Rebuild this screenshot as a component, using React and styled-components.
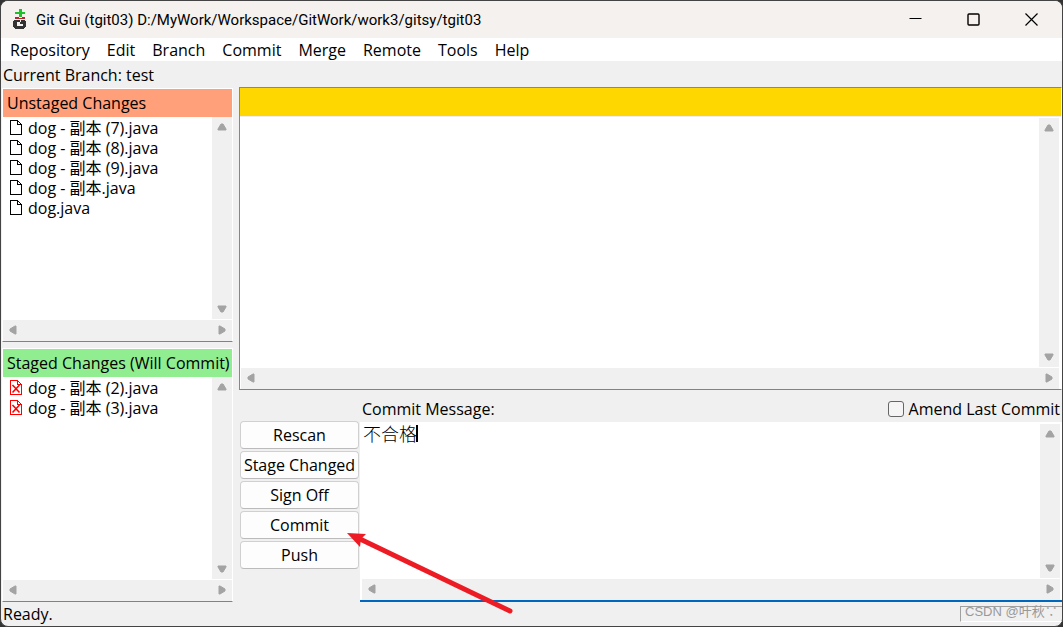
import React, { useState } from 'react'
import styled, { createGlobalStyle } from 'styled-components'

const MENUS = ['Repository', 'Edit', 'Branch', 'Commit', 'Merge', 'Remote', 'Tools', 'Help']
const UNSTAGED = ['dog - 副本 (7).java', 'dog - 副本 (8).java', 'dog - 副本 (9).java', 'dog - 副本.java', 'dog.java']
const STAGED = ['dog - 副本 (2).java', 'dog - 副本 (3).java']
const ACTIONS = ['Rescan', 'Stage Changed', 'Sign Off', 'Commit', 'Push']
const MESSAGE_SIZE = 18

export default function App() {
	const [message, setMessage] = useState('不合格')

	return (
		<>
			<GlobalStyle />
			<Window>
				<TitleBar>
					<GitLogo />
					<Title>Git Gui (tgit03) D:/MyWork/Workspace/GitWork/work3/gitsy/tgit03</Title>
					<CaptionButton aria-label="Minimize">
						<path d="M0.5 5.5h12" />
					</CaptionButton>
					<CaptionButton aria-label="Maximize">
						<rect x="1" y="1" width="11" height="11" rx="1" strokeWidth="1.4" />
					</CaptionButton>
					<CaptionButton aria-label="Close">
						<path d="M0.5 0.5l12 12M12.5 0.5l-12 12" strokeWidth="1.2" />
					</CaptionButton>
				</TitleBar>

				<MenuBar>
					{MENUS.map((name) => (
						<MenuButton key={name}>{name}</MenuButton>
					))}
				</MenuBar>

				<BranchLine>Current Branch: test</BranchLine>

				<Main>
					<Sidebar>
						<FilePanel title="Unstaged Changes" color="#ffa07a" files={UNSTAGED} />
						<FilePanel title="Staged Changes (Will Commit)" color="#90ee90" files={STAGED} removed />
					</Sidebar>

					<Content>
						<DiffPanel>
							<DiffHeader />
							<DiffBody>
								<ScrollArea>
									<DiffText />
								</ScrollArea>
							</DiffBody>
						</DiffPanel>

						<CommitArea>
							<Actions>
								{ACTIONS.map((name) => (
									<ActionButton key={name}>{name}</ActionButton>
								))}
							</Actions>
							<CommitColumn>
								<CommitHeader>
									<label htmlFor="message">Commit Message:</label>
									<Amend>
										<Checkbox type="checkbox" id="amend" />
										<label htmlFor="amend">Amend Last Commit</label>
									</Amend>
								</CommitHeader>
								<MessageBox>
									<ScrollArea>
										<MessageField>
											<MessageInput
												id="message"
												value={message}
												onChange={(e) => setMessage(e.target.value)}
											/>
											<Caret style={{ left: message.length * MESSAGE_SIZE }} />
										</MessageField>
									</ScrollArea>
								</MessageBox>
							</CommitColumn>
						</CommitArea>
					</Content>
				</Main>

				<StatusBar>
					<span>Ready.</span>
					<Watermark>CSDN @叶秋∵</Watermark>
				</StatusBar>

				<Arrow viewBox="0 0 168 84">
					<path d="M164 80L14 8" stroke="#ed1c24" strokeWidth="5" strokeLinecap="round" />
					<path d="M1 2L20 3L15 8L14 16Z" fill="#ed1c24" />
				</Arrow>
			</Window>
		</>
	)
}

function FilePanel({ title, color, files, removed }) {
	return (
		<Panel>
			<PanelHeader $color={color}>{title}</PanelHeader>
			<ScrollArea>
				<FileList>
					{files.map((name) => (
						<FileRow key={name}>
							<FileIcon removed={removed} />
							{name}
						</FileRow>
					))}
				</FileList>
			</ScrollArea>
		</Panel>
	)
}

function ScrollArea({ children }) {
	return (
		<ScrollGrid>
			{children}
			<VerticalBar>
				<ScrollButton aria-label="Scroll up" $turn={0} />
				<ScrollButton aria-label="Scroll down" $turn={180} />
			</VerticalBar>
			<HorizontalBar>
				<ScrollButton aria-label="Scroll left" $turn={270} />
				<ScrollButton aria-label="Scroll right" $turn={90} />
			</HorizontalBar>
		</ScrollGrid>
	)
}

function ScrollButton({ $turn, ...props }) {
	return (
		<PlainButton {...props}>
			<Triangle viewBox="0 0 10 8" $turn={$turn}>
				<path d="M4 1h2l3 5v1h-8v-1z" fill="#a3a3a3" stroke="#a3a3a3" strokeLinejoin="round" />
			</Triangle>
		</PlainButton>
	)
}

function CaptionButton({ children, ...props }) {
	return (
		<CaptionBox {...props}>
			<svg width="13" height="13" viewBox="0 0 13 13" fill="none" stroke="#000">
				{children}
			</svg>
		</CaptionBox>
	)
}

function FileIcon({ removed }) {
	const color = removed ? '#f00' : '#000'
	return (
		<svg width="12" height="16" viewBox="0 0 12 16" fill="none" stroke={color}>
			<path d="M0.5 0.5h7l4 4v10h-11zM7.5 0.5v4h4" shapeRendering="crispEdges" />
			{removed && <path d="M2.5 5l7 7.5M9.5 5l-7 7.5" strokeWidth="1.6" />}
		</svg>
	)
}

function GitLogo() {
	return (
		<svg width="16" height="21" viewBox="0 0 16 21" shapeRendering="crispEdges">
			<path d="M7 0h3v3h3v2h-3v3h-3v-3h-4v-2h4z" fill="#1fc02b" />
			<path d="M3 8h4v1h3v-1h3v2h-10z" fill="#b8262c" />
			<path
				d="M2 11h6v2h-3v4h6v-2h-3v-2h1v-2h4v1h1v6h-1v1h-1v1h-9v-1h-1v-1h-1v-6h1z"
				fill="#333"
			/>
		</svg>
	)
}

const GlobalStyle = createGlobalStyle`
	* {
		box-sizing: border-box;
	}

	body {
		margin: 0;
		background: #333;
		color: #000;
		font: 16px/20px 'Open Sans', 'Noto Sans CJK SC', sans-serif;
	}

	button {
		padding: 0;
		border: 0;
		background: none;
		color: inherit;
		font: inherit;
	}
`

const Window = styled.div`
	position: relative;
	display: flex;
	flex-direction: column;
	height: 100vh;
	min-height: 480px;
	overflow: hidden;
	border: 1px solid #444;
	border-radius: 8px;
	background: #f0f0f0;
`

const TitleBar = styled.header`
	display: flex;
	align-items: center;
	height: 37px;
	padding: 0 2px 0 11px;
	background: #f5f1ee;
`

const Title = styled.h1`
	flex: 1;
	margin: 0 0 0 8px;
	font-family: Roboto, sans-serif;
	font-size: 15px;
	font-weight: 400;
	white-space: nowrap;
`

const CaptionBox = styled.button`
	display: grid;
	place-items: center;
	width: 58px;
	height: 36px;
`

const MenuBar = styled.nav`
	display: flex;
	gap: 17px;
	height: 23px;
	padding: 0 9px;
	background: #fff;
`

const MenuButton = styled.button`
	height: 24px;
`

const BranchLine = styled.div`
	height: 26px;
	padding: 4px 2px;
`

const Main = styled.main`
	display: flex;
	flex: 1;
	gap: 6px;
	min-height: 0;
	padding-left: 1px;
`

const Sidebar = styled.aside`
	display: flex;
	flex-direction: column;
	gap: 6px;
	width: 231px;
	padding-top: 1px;
`

const Panel = styled.section`
	display: flex;
	flex: 1;
	flex-direction: column;
	min-height: 0;
	border: 1px solid #fff;
	border-bottom-color: #828282;
`

const PanelHeader = styled.h2`
	height: 28px;
	margin: 0;
	padding: 4px;
	background: ${(props) => props.$color};
	font-size: 16px;
	font-weight: 400;
	white-space: nowrap;
`

const FileList = styled.ul`
	margin: 0;
	padding: 1px 7px;
	overflow: hidden;
	background: #fff;
	list-style: none;
`

const FileRow = styled.li`
	display: flex;
	align-items: center;
	gap: 6px;
	height: 20px;
	white-space: nowrap;
`

const ScrollGrid = styled.div`
	display: grid;
	flex: 1;
	grid-template-rows: 1fr 21px;
	grid-template-columns: 1fr 20px;
	row-gap: 1px;
	min-height: 0;
	background: #fff;
`

const VerticalBar = styled.div`
	display: flex;
	flex-direction: column;
	justify-content: space-between;
	background: #f0f0f0;
`

const HorizontalBar = styled.div`
	display: flex;
	grid-column: 1 / 3;
	justify-content: space-between;
	padding-right: 1px;
	background: #f0f0f0;
`

const PlainButton = styled.button`
	display: grid;
	place-items: center;
	width: 19px;
	height: 20px;
`

const Triangle = styled.svg`
	width: 10px;
	height: 8px;
	transform: rotate(${(props) => props.$turn}deg);
`

const Content = styled.div`
	display: grid;
	flex: 1;
	grid-template-rows: 303fr 212fr;
	min-width: 0;
`

const DiffPanel = styled.section`
	display: flex;
	flex-direction: column;
	min-height: 0;
	border: 1px solid #828790;
	border-right-color: #fff;
	border-bottom-color: #828282;
`

const DiffHeader = styled.div`
	height: 29px;
	border-bottom: 1px solid #eee;
	background: #ffd700;
`

const DiffBody = styled.div`
	display: flex;
	flex: 1;
	flex-direction: column;
	min-height: 0;
	padding: 1px 2px 0 1px;
	background: #fff;
`

const DiffText = styled.div`
	background: #fff;
`

const CommitArea = styled.section`
	display: flex;
	gap: 1px;
	min-height: 0;
	padding-left: 1px;
`

const Actions = styled.div`
	display: flex;
	flex-direction: column;
	gap: 2px;
	width: 119px;
	padding-top: 31px;
`

const ActionButton = styled.button`
	height: 28px;
	border: 1px solid #d0d0d0;
	border-bottom-color: #bbb;
	border-radius: 4px;
	background: #fdfdfd;
	white-space: nowrap;
`

const CommitColumn = styled.div`
	display: flex;
	flex: 1;
	flex-direction: column;
	min-width: 0;
`

const CommitHeader = styled.div`
	display: flex;
	align-items: center;
	justify-content: space-between;
	height: 32px;
	padding: 6px 2px 0;
`

const Amend = styled.div`
	display: flex;
	align-items: center;
	gap: 5px;
`

const Checkbox = styled.input`
	width: 16px;
	height: 16px;
	margin: 0;
	border: 1px solid #666;
	border-radius: 3px;
	background: #f5f5f5;
	appearance: none;

	&:checked {
		background: #0067c0;
	}
`

const MessageBox = styled.div`
	display: flex;
	flex: 1;
	flex-direction: column;
	min-height: 0;
	padding: 2px 2px 0;
	border-bottom: 2px solid #0067c0;
	background: #fff;
`

const MessageField = styled.div`
	position: relative;
`

const MessageInput = styled.textarea`
	display: block;
	width: 100%;
	height: 100%;
	padding: 0 1px;
	border: 0;
	outline: none;
	background: #fff;
	caret-color: transparent;
	font: 300 ${MESSAGE_SIZE}px/18px 'Noto Sans CJK SC', monospace;
	resize: none;
`

const Caret = styled.span`
	position: absolute;
	top: 1px;
	width: 2px;
	height: 17px;
	background: #000;
`

const StatusBar = styled.footer`
	display: flex;
	align-items: center;
	justify-content: space-between;
	height: 24px;
	padding-left: 2px;
`

const Watermark = styled.span`
	width: 102px;
	height: 16px;
	padding-left: 4px;
	border: 1px solid #a0a0a0;
	border-right: 0;
	border-bottom-color: #fff;
	color: #999;
	font: 13px/10px 'Liberation Sans', 'Noto Sans CJK SC', sans-serif;
	white-space: nowrap;
`

const Arrow = styled.svg`
	position: absolute;
	top: 530px;
	left: 345px;
	width: 168px;
	height: 84px;
	fill: none;
	pointer-events: none;
`
